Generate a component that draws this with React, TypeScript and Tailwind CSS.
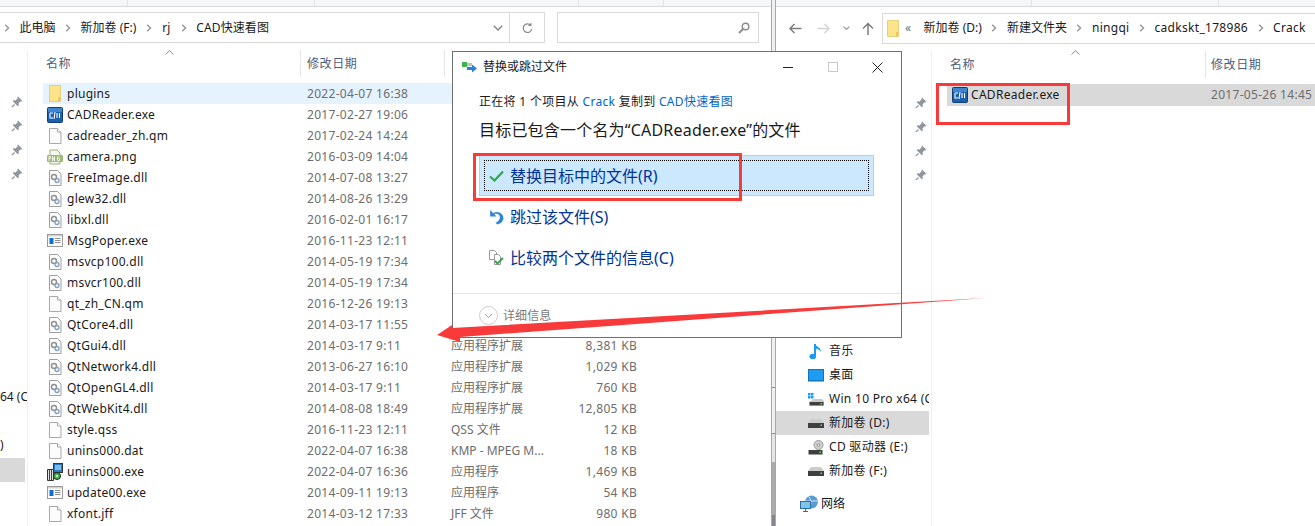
import React from "react";

const FONT = "font-['Noto_Sans','Noto_Sans_CJK_SC',sans-serif]";

function Folder() {
  return (
    <svg width="14" height="17" viewBox="0 0 14 17" className="shrink-0">
      <path d="M1.500 .5h11v16h-11z" fill="#fde38a" stroke="#e8cf80" />
      <path d="M10 16.500v-4.500h2.500v4.500z" fill="#e9c65e" />
    </svg>
  );
}

function CadIcon() {
  return (
    <svg width="16" height="16" viewBox="0 0 16 16" className="shrink-0">
      <rect x="0.500" y="0.500" width="15" height="15" rx="1" fill="#1c5fae" stroke="#123e78" />
      <rect x="1" y="1" width="14" height="4" fill="#3f86cf" />
      <path d="M3 6h3M3 6v5h3M8 5l-1 7M10 6v5M12.500 6v5" stroke="#fff" strokeWidth="1.100" fill="none" />
    </svg>
  );
}

function BlankFile() {
  return (
    <svg width="16" height="16" viewBox="0 0 16 16" className="shrink-0">
      <path d="M2.500 .5h8l3.500 3.500v11.500h-11.500z" fill="#fcfcfc" stroke="#a9a9a9" />
      <path d="M10.500 .5v3.500h3.500" fill="#fff" stroke="#a9a9a9" />
    </svg>
  );
}

function DllFile() {
  return (
    <svg width="16" height="16" viewBox="0 0 16 16" className="shrink-0">
      <path d="M2.500 .5h8l3.500 3.500v11.500h-11.500z" fill="#fcfcfc" stroke="#a0a0a0" />
      <circle cx="7" cy="7" r="2.500" fill="none" stroke="#8f8f8f" strokeWidth="1.400" />
      <circle cx="10" cy="10.500" r="2" fill="none" stroke="#7fa0c0" strokeWidth="1.300" />
    </svg>
  );
}

function PngFile() {
  return (
    <svg width="16" height="16" viewBox="0 0 16 16" className="shrink-0">
      <path d="M3 1h7l3 3v11H3z" fill="#f6f8f0" stroke="#9bb07c" />
      <rect x="0" y="6" width="16" height="7" rx="1" fill="#9cbb76" />
      <path d="M2 12V7.500h1.500v2H2M5.500 12V7.500l2 4.500V7.500M12.500 8H10.500v3.500h2V9.500h-1" stroke="#fff" strokeWidth=".8" fill="none" />
    </svg>
  );
}

function AppFile() {
  return (
    <svg width="16" height="16" viewBox="0 0 16 16" className="shrink-0">
      <rect x="0.500" y="1.500" width="15" height="12" fill="#fff" stroke="#9a9a9a" />
      <rect x="1" y="2" width="14" height="1.500" fill="#cfd4d9" />
      <rect x="2.500" y="5" width="4" height="6" fill="#0f6fd1" />
      <path d="M8 5.500h5.500M8 7.500h5.500M8 9.500h5.500" stroke="#8a8a8a" />
    </svg>
  );
}

function SetupIcon() {
  return (
    <svg width="16" height="18" viewBox="0 0 16 18" className="shrink-0">
      <rect x="6.500" y=".5" width="9" height="9" fill="#2f78c9" stroke="#333" />
      <rect x="8" y="2" width="6" height="5" fill="#6fc2ef" />
      <path d="M.5 6.500h6v11h-6z" fill="#e3e3e3" stroke="#333" />
      <path d="M2.500 6.500v11M4.500 6.500v11" stroke="#444" />
      <circle cx="10" cy="13" r="3.500" fill="#3fbf4a" stroke="#222" />
      <circle cx="10" cy="13" r="1" fill="#fff" />
    </svg>
  );
}

function Pin() {
  return (
    <svg width="12" height="12" viewBox="0 0 12 12">
      <path d="M7 .5l4.500 4.500-1 .6-.8-.3L7.500 7.500 7.800 9.500 6.800 10.300 1.700 5.200l.8-1 2 .3L6.700 2.300 6.400 1.500z" fill="#8f96a0" />
      <path d="M3.500 8.500L.8 11.200" stroke="#8f96a0" strokeWidth="1.200" />
    </svg>
  );
}

function Chevron() {
  return (
    <svg width="6" height="8" viewBox="0 0 6 8" className="shrink-0">
      <path d="M1.200 .8L4.500 4 1.200 7.200" stroke="#9a9a9a" strokeWidth="1.500" fill="none" />
    </svg>
  );
}

function SortUp() {
  return (
    <svg width="9" height="5" viewBox="0 0 9 5">
      <path d="M.5 4.500L4.500 .7l4 3.800" stroke="#8a8a8a" fill="none" />
    </svg>
  );
}

type Row = { name: string; date: string; type?: string; size?: string; icon: React.ReactNode; hot?: boolean };

const rows: Row[] = [
  { name: "plugins", date: "2022-04-07 16:38", icon: <Folder />, hot: true },
  { name: "CADReader.exe", date: "2017-02-27 19:06", icon: <CadIcon /> },
  { name: "cadreader_zh.qm", date: "2017-02-24 14:24", icon: <BlankFile /> },
  { name: "camera.png", date: "2016-03-09 14:04", icon: <PngFile /> },
  { name: "FreeImage.dll", date: "2014-07-08 13:27", icon: <DllFile /> },
  { name: "glew32.dll", date: "2014-08-26 13:29", icon: <DllFile /> },
  { name: "libxl.dll", date: "2016-02-01 16:17", icon: <DllFile /> },
  { name: "MsgPoper.exe", date: "2016-11-23 12:11", icon: <AppFile /> },
  { name: "msvcp100.dll", date: "2014-05-19 17:34", icon: <DllFile /> },
  { name: "msvcr100.dll", date: "2014-05-19 17:34", icon: <DllFile /> },
  { name: "qt_zh_CN.qm", date: "2016-12-26 19:13", icon: <BlankFile /> },
  { name: "QtCore4.dll", date: "2014-03-17 11:55", icon: <DllFile /> },
  { name: "QtGui4.dll", date: "2014-03-17 9:11", type: "应用程序扩展", size: "8,381 KB", icon: <DllFile /> },
  { name: "QtNetwork4.dll", date: "2013-06-27 16:10", type: "应用程序扩展", size: "1,029 KB", icon: <DllFile /> },
  { name: "QtOpenGL4.dll", date: "2014-03-17 9:11", type: "应用程序扩展", size: "760 KB", icon: <DllFile /> },
  { name: "QtWebKit4.dll", date: "2014-08-08 18:49", type: "应用程序扩展", size: "12,805 KB", icon: <DllFile /> },
  { name: "style.qss", date: "2016-11-23 12:11", type: "QSS 文件", size: "12 KB", icon: <BlankFile /> },
  { name: "unins000.dat", date: "2022-04-07 16:38", type: "KMP - MPEG M...", size: "18 KB", icon: <BlankFile /> },
  { name: "unins000.exe", date: "2022-04-07 16:36", type: "应用程序", size: "1,469 KB", icon: <SetupIcon /> },
  { name: "update00.exe", date: "2014-09-11 19:13", type: "应用程序", size: "54 KB", icon: <AppFile /> },
  { name: "xfont.jff", date: "2014-03-12 17:33", type: "JFF 文件", size: "980 KB", icon: <BlankFile /> },
];

function Drive() {
  return (
    <svg width="16" height="9" viewBox="0 0 16 9">
      <path d="M3 0h10l3 4v5H0V4z" fill="#cccccc" />
      <rect x="0" y="4" width="16" height="5" fill="#3f3f3f" />
      <rect x="12.500" y="5.500" width="1.500" height="1.500" fill="#63e06b" />
    </svg>
  );
}

function NavTree() {
  const items: { label: string; icon: React.ReactNode; active?: boolean }[] = [
    {
      label: "音乐",
      icon: (
        <svg width="14" height="17" viewBox="0 0 14 17">
          <path d="M6 1v11.500" stroke="#1a9af0" strokeWidth="2" />
          <ellipse cx="3.800" cy="13.500" rx="3.300" ry="2.700" fill="#1a9af0" />
          <path d="M6 1c1 3 6 3 6 8-1-2-3-3-6-3.500z" fill="#1a9af0" />
        </svg>
      ),
    },
    {
      label: "桌面",
      icon: (
        <svg width="16" height="13" viewBox="0 0 16 13">
          <rect x="0.500" y="0.500" width="15" height="11" fill="#1f9bf0" stroke="#0f74c4" />
          <rect x="0" y="11" width="16" height="1.500" fill="#0f74c4" />
        </svg>
      ),
    },
    {
      label: "Win 10 Pro x64 (C",
      icon: (
        <svg width="16" height="13" viewBox="0 0 16 13">
          <path d="M0 0h2.500v2.500H0zM3 0h2.500v2.500H3zM0 3h2.500v2.500H0zM3 3h2.500v2.500H3z" fill="#1a9af0" />
          <path d="M3 8l2-2h9l2 2v4.500H1.500V8z" fill="#c9c9c9" />
          <rect x="1.500" y="9" width="14" height="3.500" fill="#3f3f3f" />
          <rect x="12.500" y="10" width="1.500" height="1.500" fill="#63e06b" />
        </svg>
      ),
    },
    { label: "新加卷 (D:)", active: true, icon: <Drive /> },
    {
      label: "CD 驱动器 (E:)",
      icon: (
        <svg width="16" height="15" viewBox="0 0 16 15">
          <circle cx="10.500" cy="5" r="4.500" fill="#cfcfcf" stroke="#9a9a9a" />
          <circle cx="10.500" cy="5" r="1.300" fill="#fff" stroke="#888" />
          <rect x="0.500" y="10" width="14" height="4.500" fill="#3f3f3f" />
          <rect x="11.500" y="11.500" width="1.500" height="1.500" fill="#63e06b" />
        </svg>
      ),
    },
    { label: "新加卷 (F:)", icon: <Drive /> },
  ];
  return (
    <div className="flex w-[153px] flex-col text-[12px] text-[#1a1a1a]">
      {items.map((it) => (
        <div
          key={it.label}
          className={`flex h-6 items-center gap-[5px] overflow-hidden whitespace-nowrap pl-[32px] ${it.active ? "bg-[#d9d9d9]" : ""}`}
        >
          <span className="flex w-4 shrink-0 justify-center">{it.icon}</span>
          <span className="tracking-[0.3px]">{it.label}</span>
        </div>
      ))}
      <div className="mt-[9px] flex h-6 items-center gap-[2px] pl-[24px]">
        <svg width="19" height="18" viewBox="0 0 19 18" className="shrink-0">
          <circle cx="11.500" cy="7" r="6.500" fill="#5b9bd5" />
          <path d="M8 1c3 2 4 8 1 12M5 6h13" stroke="#cfe6f7" fill="none" />
          <rect x="0.500" y="6.500" width="10" height="7" fill="#7cc3ee" stroke="#2f6f9f" />
          <path d="M3 16.500h5M5.500 13.500v3" stroke="#2f6f9f" />
        </svg>
        <span>网络</span>
      </div>
    </div>
  );
}

function AddressBar({ children, className }: { children: React.ReactNode; className: string }) {
  return <div className={`flex h-[31px] items-center border border-[#d9d9d9] ${className}`}>{children}</div>;
}

function LeftPane() {
  return (
    <div className="flex h-full w-[771px] shrink-0 flex-col bg-white">
      <div className="flex h-[7px] shrink-0 border-b border-[#d9d9d9] bg-[#f5f6f7]">
        <div className="w-[128px] border-r border-[#e3e3e3]" />
        <div className="w-[187px] border-r border-[#e3e3e3]" />
        <div className="w-[264px] border-r border-[#e3e3e3]" />
        <div className="w-[85px] border-r border-[#e3e3e3]" />
      </div>
      <div className="mt-[5px] flex shrink-0 items-stretch">
        <AddressBar className="w-[545px] border-l-0 text-[12px] text-[#1a1a1a]">
          <div className="flex flex-1 items-center gap-[9.500px] pl-[4px]">
            <Chevron />
            <span>此电脑</span>
            <Chevron />
            <span>新加卷 (F:)</span>
            <Chevron />
            <span className="px-[1px]">rj</span>
            <Chevron />
            <span className="tracking-[0.1px]">CAD快速看图</span>
          </div>
          <div className="flex h-full w-[23px] items-center justify-center border-r border-[#d9d9d9]">
            <svg width="10" height="6" viewBox="0 0 10 6">
              <path d="M.8 .8L5 5l4.200-4.200" stroke="#8a8a8a" strokeWidth="1.500" fill="none" />
            </svg>
          </div>
          <div className="flex h-full w-[34px] items-center justify-center">
            <svg width="11" height="12" viewBox="0 0 11 12">
              <path d="M8.700 3.200A4.300 4.300 0 1 0 9.800 7" stroke="#8a8a8a" strokeWidth="1.200" fill="none" />
              <path d="M9.500 .5V4H6z" fill="#8a8a8a" />
            </svg>
          </div>
        </AddressBar>
        <AddressBar className="ml-[12px] w-[202px] justify-end pr-[8px]">
          <svg width="12" height="12" viewBox="0 0 12 12">
            <circle cx="7.500" cy="4.500" r="3.300" stroke="#8a8a8a" strokeWidth="1.400" fill="none" />
            <path d="M5 7L1 11" stroke="#8a8a8a" strokeWidth="1.800" />
          </svg>
        </AddressBar>
      </div>
      <div className="mt-[7px] flex min-h-0 flex-1">
        <div className="flex w-[28px] shrink-0 flex-col overflow-hidden border-r border-[#f0f0f0]">
          <div className="h-[46px] shrink-0" />
          <div className="flex flex-col items-center gap-[12px] pl-[6px]">
            <Pin />
            <Pin />
            <Pin />
            <Pin />
          </div>
          <div className="mt-[205px] flex h-6 shrink-0 items-center whitespace-nowrap text-[12px] text-[#1a1a1a]">64 (C</div>
          <div className="mt-[24px] flex h-6 shrink-0 items-center text-[12px] text-[#1a1a1a]">)</div>
          <div className="mt-[1px] h-[24px] w-[25px] shrink-0 bg-[#d9d9d9]" />
        </div>
        <div className="flex min-w-0 flex-1 flex-col pl-[15px] text-[12px]">
          <div className="relative flex h-[27px] shrink-0 items-center text-[#4c607a]">
            <div className="w-[257px] pl-[3px] tracking-[0.6px]">名称</div>
            <div className="flex h-[27px] w-[144px] items-center border-l border-[#e5e5e5] pl-[6px] tracking-[0.6px]">修改日期</div>
            <div className="h-[27px] border-l border-[#e5e5e5]" />
            <div className="absolute left-[122px] top-0">
              <SortUp />
            </div>
          </div>
          <div className="mt-[6px] flex flex-col">
            {rows.map((r) => (
              <div key={r.name} className={`flex h-[21px] shrink-0 items-center ${r.hot ? "bg-[#e5f3ff]" : ""}`}>
                <span className="flex w-[24px] shrink-0 justify-center">{r.icon}</span>
                <span className="w-[240px] shrink-0 tracking-[0.25px] text-[#1a1a1a]">{r.name}</span>
                <span className="w-[144px] shrink-0 whitespace-nowrap tracking-[0.3px] text-[#6d6d6d]">{r.date}</span>
                <span className="w-[116px] shrink-0 whitespace-nowrap text-[#6d6d6d]">{r.type ?? ""}</span>
                <span className="w-[70px] shrink-0 whitespace-nowrap text-right tracking-[0.3px] text-[#6d6d6d]">{r.size ?? ""}</span>
              </div>
            ))}
          </div>
        </div>
      </div>
    </div>
  );
}

function Divider() {
  return (
    <div className="flex h-full w-[5px] shrink-0 flex-col border-x border-[#a8a8a8] bg-[#f0f0f0]">
      <div className="h-[388px] shrink-0 border-b border-[#8a8a8a]" />
      <div className="h-[46px] shrink-0 border-b border-[#8a8a8a]" />
      <div className="h-[28px] shrink-0 bg-[#e6e6e6]" />
      <div className="h-[53px] shrink-0 bg-[#aaaaaa]" />
      <div className="flex-1 bg-[#85858f]" />
    </div>
  );
}

function RightPane() {
  return (
    <div className="flex h-full min-w-0 flex-1 flex-col overflow-hidden bg-white">
      <div className="flex h-[7px] shrink-0 border-b border-[#d9d9d9] bg-[#f5f6f7]">
        <div className="w-[256px] border-r border-[#e3e3e3]" />
        <div className="w-[187px] border-r border-[#e3e3e3]" />
      </div>
      <div className="mt-[5px] flex h-[32px] shrink-0 items-center">
        <div className="flex w-[106px] shrink-0 items-center pl-[13px]">
          <svg width="13" height="11" viewBox="0 0 13 11">
            <path d="M12.500 5.500H1.500M5.500 1L1 5.500 5.500 10" stroke="#7d7d7d" strokeWidth="1.500" fill="none" />
          </svg>
          <svg width="13" height="11" viewBox="0 0 13 11" className="ml-[15px]">
            <path d="M.5 5.500h11M7.500 1L12 5.500 7.500 10" stroke="#d4d4d4" strokeWidth="1.500" fill="none" />
          </svg>
          <svg width="7" height="5" viewBox="0 0 7 5" className="ml-[13px]">
            <path d="M.6 .6L3.500 3.500 6.400 .6" stroke="#9a9a9a" strokeWidth="1.200" fill="none" />
          </svg>
          <svg width="12" height="13" viewBox="0 0 12 13" className="ml-[12px]">
            <path d="M6 13V1.500M1 6.500L6 1.500l5 5" stroke="#7d7d7d" strokeWidth="1.500" fill="none" />
          </svg>
        </div>
        <div className="flex h-[31px] flex-1 items-center gap-[9.500px] whitespace-nowrap border-y border-l border-[#d9d9d9] pl-[3px] text-[12px] text-[#1a1a1a]">
          <span className="flex items-center gap-[5px]">
            <Folder />
            <span className="text-[#6d6d6d]">«</span>
          </span>
          <span className="ml-[3px]">新加卷 (D:)</span>
          <Chevron />
          <span>新建文件夹</span>
          <Chevron />
          <span className="tracking-[0.3px]">ningqi</span>
          <Chevron />
          <span className="tracking-[0.3px]">cadkskt_178986</span>
          <Chevron />
          <span className="tracking-[0.3px]">Crack</span>
        </div>
      </div>
      <div className="mt-[6px] flex min-h-0 flex-1">
        <div className="flex w-[156px] shrink-0 flex-col overflow-hidden border-r border-[#f0f0f0]">
          <div className="h-[47px] shrink-0" />
          <div className="flex flex-col items-end gap-[12px] pr-[4px]">
            <Pin />
            <Pin />
            <Pin />
            <Pin />
          </div>
          <div className="mt-[158px]">
            <NavTree />
          </div>
        </div>
        <div className="flex min-w-0 flex-1 flex-col pl-[15px] text-[12px]">
          <div className="relative mt-[1px] flex h-[27px] shrink-0 items-center text-[#4c607a]">
            <div className="w-[258px] pl-[3px] tracking-[0.6px]">名称</div>
            <div className="flex h-[27px] items-center border-l border-[#e5e5e5] pl-[5px] tracking-[0.6px]">修改日期</div>
            <div className="absolute left-[124px] top-[-1px]">
              <SortUp />
            </div>
          </div>
          <div className="mt-[6px] flex h-[22px] items-center whitespace-nowrap bg-[#d9d9d9] pl-[5px]">
            <CadIcon />
            <span className="ml-[3px] w-[240px] tracking-[0.3px] text-[#1a1a1a]">CADReader.exe</span>
            <span className="tracking-[0.3px] text-[#6d6d6d]">2017-05-26 14:45</span>
          </div>
        </div>
      </div>
    </div>
  );
}

function Choice({ icon, label, active }: { icon: React.ReactNode; label: string; active?: boolean }) {
  return (
    <div className={`h-[41px] w-[395px] border p-[4px] ${active ? "border-[#a6d5fb] bg-[#cce8ff]" : "border-transparent"}`}>
      <div className={`flex h-full items-center pl-[3px] ${active ? "border border-dotted border-black" : "border border-transparent"}`}>
        <span className="flex w-[17px] shrink-0 justify-center">{icon}</span>
        <span className="ml-[5px] text-[16px] text-[#003399]">{label}</span>
      </div>
    </div>
  );
}

function Dialog() {
  return (
    <div className={`absolute left-[452px] top-[51px] flex h-[287px] w-[450px] flex-col border border-[#707070] bg-white ${FONT}`}>
      <div className="flex h-[30px] shrink-0 items-center pl-[9px] text-[12px] text-[#1a1a1a]">
        <svg width="16" height="12" viewBox="0 0 16 12">
          <rect x="0" y="1" width="5" height="5" fill="#3fb34f" />
          <rect x="5" y="2" width="5" height="3" fill="#bfbfbf" />
          <path d="M5 6h5V3.500L15 7.500 10 11.500V9H5z" fill="#2b7fd9" />
        </svg>
        <span className="ml-[5px]">替换或跳过文件</span>
        <span className="flex-1" />
        <svg width="10" height="1" viewBox="0 0 10 1" className="mr-[35px]">
          <rect width="10" height="1" fill="#222" />
        </svg>
        <svg width="10" height="10" viewBox="0 0 10 10" className="mr-[34px]">
          <rect x=".5" y=".5" width="9" height="9" fill="none" stroke="#c8c8c8" />
        </svg>
        <svg width="11" height="11" viewBox="0 0 11 11" className="mr-[18px]">
          <path d="M.5 .5l10 10M10.500 .5l-10 10" stroke="#222" />
        </svg>
      </div>
      <div className="flex min-h-0 flex-1 flex-col pl-[26px]">
        <div className="mt-[11px] flex h-[18px] items-center text-[12px] tracking-[0.3px] text-[#1a1a1a]">
          <span>正在将 1 个项目从&nbsp;</span>
          <span className="text-[#0066cc]">Crack</span>
          <span>&nbsp;复制到&nbsp;</span>
          <span className="text-[#0066cc]">CAD快速看图</span>
        </div>
        <div className="mt-[8px] flex h-[22px] items-center whitespace-nowrap text-[16px] tracking-[0.2px] text-[#1a1a1a]">目标已包含一个名为“CADReader.exe”的文件</div>
        <div className="mt-[14px] flex flex-col">
          <Choice
            active
            label="替换目标中的文件(R)"
            icon={
              <svg width="15" height="12" viewBox="0 0 15 12">
                <path d="M1 6.500L5.500 10.500 14 1.500" stroke="#2ea84a" strokeWidth="2.200" fill="none" />
              </svg>
            }
          />
          <Choice
            label="跳过该文件(S)"
            icon={
              <svg width="15" height="16" viewBox="0 0 14 15">
                <path d="M1 1v6h6L5 5c3-1.500 6 1 5 4-.5 2-2.500 3.500-4 4l2 1.500c3-.5 5.500-3 5.500-6 0-4-5.500-7.500-9.500-4.500z" fill="#2f87d3" />
              </svg>
            }
          />
          <Choice
            label="比较两个文件的信息(C)"
            icon={
              <svg width="15" height="16" viewBox="0 0 15 16">
                <path d="M.5 .5h5l2 2v7h-7z" fill="#fff" stroke="#999" />
                <path d="M5.500 4.500h4l2 2v8h-6z" fill="#fff" stroke="#999" />
                <path d="M6 11l2.500 2.500L14 8" stroke="#2ea84a" strokeWidth="1.800" fill="none" />
              </svg>
            }
          />
        </div>
      </div>
      <div className="flex h-[44px] shrink-0 items-center border-t border-[#e5e5e5] pl-[26px] text-[12px] tracking-[0.1px] text-[#7a7a7a]">
        <svg width="19" height="19" viewBox="0 0 19 19">
          <circle cx="9.500" cy="9.500" r="9" fill="none" stroke="#cfcfcf" />
          <path d="M6 8l3.500 3.500L13 8" stroke="#a0a0a0" fill="none" />
        </svg>
        <span className="ml-[5px]">详细信息</span>
      </div>
    </div>
  );
}

export default function App() {
  return (
    <div className={`relative flex h-[526px] w-[1315px] overflow-hidden bg-white ${FONT}`}>
      <LeftPane />
      <Divider />
      <RightPane />
      <Dialog />
      <div className="absolute left-[473px] top-[153px] h-[48px] w-[269px] border-[3px] border-[#f83a3a]" />
      <div className="absolute left-[936px] top-[83px] h-[42px] w-[134px] border-[3px] border-[#f83a3a]" />
      <svg className="absolute left-0 top-0" width="1315" height="526" viewBox="0 0 1315 526">
        <path d="M986 298L452 328L452 325L437 335L460 342L460 337Z" fill="#f83a3a" />
      </svg>
    </div>
  );
}
